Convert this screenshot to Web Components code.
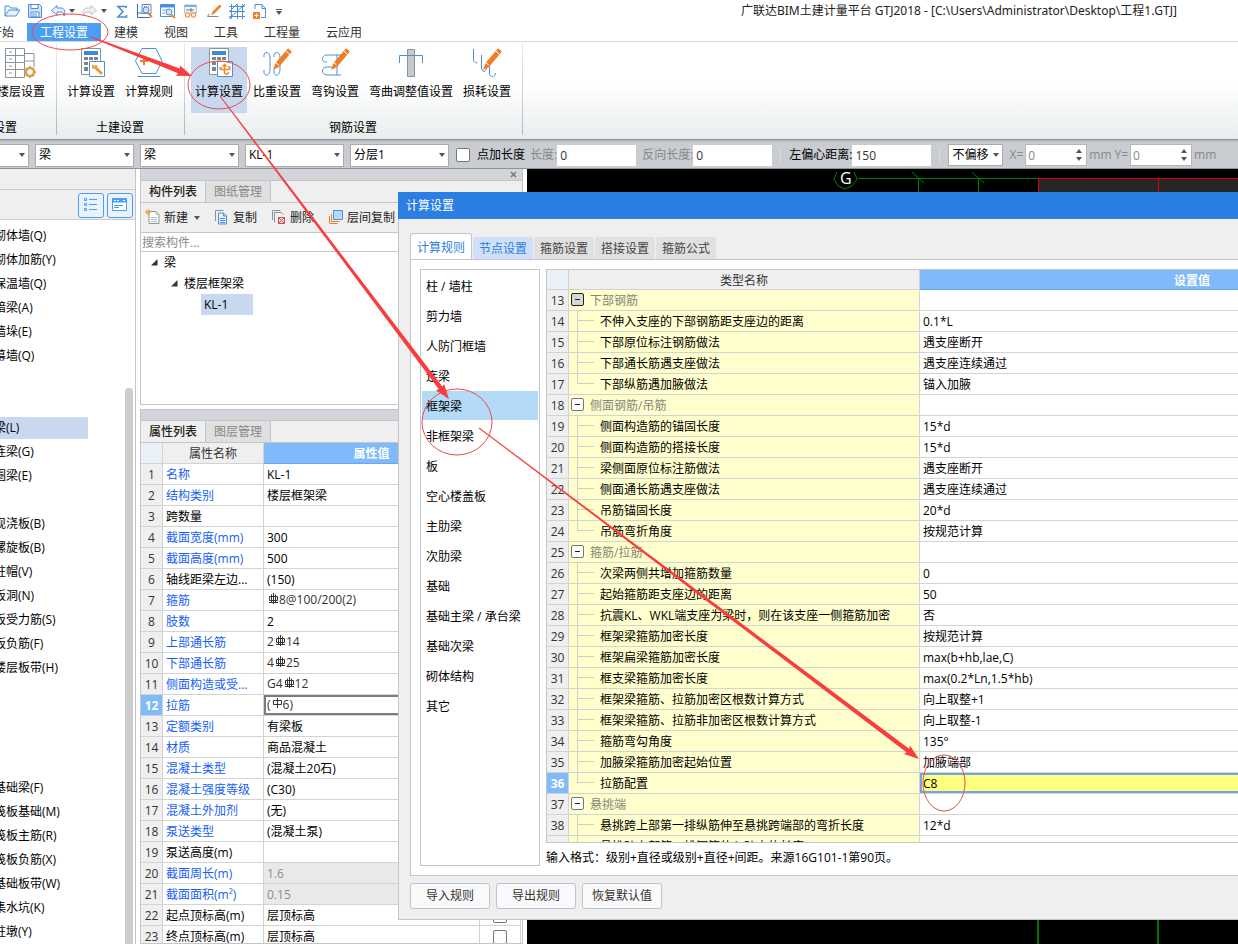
<!DOCTYPE html>
<html lang="zh-CN">
<head>
<meta charset="utf-8">
<title>广联达BIM土建计量平台 GTJ2018</title>
<style>
  html, body { margin: 0; height: 100%; overflow: hidden; }
  body { font: 12px/20px "Open Sans", "Noto Sans CJK SC", sans-serif; color: #000; background: #fff; }
</style>
</head>
<body>
<gtj-app></gtj-app>
<script>
const RESET = `<style>
  *, *::before, *::after { box-sizing: border-box; }
  :host { display: block; }
  button, input, select { font: inherit; color: inherit; margin: 0; padding: 0; border: 0; background: none; border-radius: 0; outline: 0; }
  ul { list-style: none; margin: 0; padding: 0; }
  svg { display: block; flex: none; }
  table { border-collapse: separate; border-spacing: 0; table-layout: fixed; }
</style>`;

function define(name, render, after) {
  customElements.define(name, class extends HTMLElement {
    constructor() { super(); this.attachShadow({ mode: 'open' }); }
    connectedCallback() {
      if (this.shadowRoot.firstChild) return;
      this.shadowRoot.innerHTML = RESET + render(this);
      if (after) after(this);
    }
  });
}

const B = '#4a90d9', O = '#f07d28', G = '#8a9399';
const CARET = '<svg width="6" height="4" viewBox="0 0 6 4"><path d="M0 0h6L3 4z" fill="#555"/></svg>';

const SMALL = {
  open: `<path d="M1 14V4h4l2 2h6v3M1 14L5 8h11l-4 6z" fill="#eaf3fd" stroke="${B}"/>`,
  save: `<path d="M1.500 2.500h11l2 2v11h-13z" fill="#cfe3f9" stroke="${B}"/><path d="M4 2.500h7v4H4zM4 10h8v5H4z" fill="#fff" stroke="${B}"/><path d="M5 12h5M5 14h5" stroke="${B}"/>`,
  undo: `<path d="M7 3.500L1.500 8.500 7 13v-3h4c2 0 3 1 3 4 2-5 0-8-3-8H7z" fill="#eaf3fd" stroke="${B}"/>`,
  redo: `<path d="M9 3.500l5.500 5L9 13v-3H5c-2 0-3 1-3 4-2-5 0-8 3-8h4z" fill="#f4f4f4" stroke="#c3c3c3"/>`,
  sum: `<path d="M12 6V4.500H4L9 9.500 4 15h8.500v-2" fill="none" stroke="${B}" stroke-width="1.600"/>`,
  measure: `<path d="M.5 2v13.500H13M.5 11h5V8" fill="none" stroke="#3b6ea8"/><path d="M5 2.500h9v9H5z" fill="#fff4e8" stroke="${B}"/><path d="M7 4.500h6M7 6.500h3" stroke="${O}" stroke-dasharray="1 1"/><circle cx="9" cy="8" r="3" fill="#cfe3f9" stroke="${B}"/><path d="M11 11l4 4" stroke="${O}" stroke-width="2"/>`,
  find: `<path d="M.5 2.500h14v12H.5z" fill="#fff" stroke="${B}"/><path d="M.5 2.500h14v3H.5z" fill="${B}"/><path d="M2 8h4M2 11h3" stroke="#99a"/><circle cx="9" cy="10" r="3" fill="#cfe3f9" stroke="${B}"/><path d="M11 12.500l4 3.500" stroke="#e89a20" stroke-width="2"/>`,
  view: `<path d="M1.500 3h12v8h-12z" fill="#f5f9fd" stroke="#9fc3ea"/><path d="M1.500 3h12v2h-12z" fill="#7ab0ea"/><path d="M3 8h3M8 6v4M6 8h5" stroke="#777"/><circle cx="4.500" cy="13" r="2.300" fill="#ffe9d8" stroke="${O}"/><circle cx="10.500" cy="13" r="2.300" fill="#ffe9d8" stroke="${O}"/>`,
  pen: `<path d="M14.500 3.500L7 11" stroke="${O}" stroke-width="2.500"/><path d="M5 13l1.500-3 1.500 2z" fill="${O}"/><path d="M3 12L1.500 14.500h11" fill="none" stroke="#888"/>`,
  grid: `<path d="M0 4.500h16M0 9.500h16M0 14.500h16M2.500 2v15M8.500 2v15M13.500 2v15M0 17L16 2M0 10l8-8" fill="none" stroke="${B}"/>`,
  add: `<path d="M3 7V2.500h7l3.500 4v9H9M10 2.500v4h3.500" fill="#fff" stroke="${B}"/><path d="M1 10h7v7H1z" fill="${O}"/><path d="M4.500 11.500v4M2.500 13.500h4" stroke="#fff"/>`,
  newdoc: `<path d="M4 2.500h7l3 3v9H4z" fill="#fff" stroke="${G}"/><path d="M11 2.500v3h3M6 8.500h6M6 10.500h6M6 12.500h6" fill="none" stroke="#b3bbc0"/><path d="M3 0v6M0 3h6M1 1l4 4M5 1L1 5" stroke="#f5a031"/>`,
  copy: `<path d="M1.500 12V1.500h8" fill="none" stroke="${G}"/><path d="M4.500 4h5l3 3v8h-8z" fill="#e3f0fd" stroke="${B}"/><path d="M9.500 4v3h3M6 9.500h5M6 11.500h5M6 13.500h5" fill="none" stroke="${B}"/>`,
  del: `<path d="M1.500 11V1.500h8M3.500 13V3.500h7l2 2" fill="none" stroke="${G}"/><path d="M7.500 8.500h6v6h-6z" fill="#fbe3e3" stroke="#c94a4a"/><path d="M8 9l5 5M13 9l-5 5" stroke="#c94a4a"/>`,
  floor: `<path d="M5.500 1.500h9v9h-9z" fill="#b9d9fa" stroke="${B}"/><path d="M3.500 5v7.500h8M1.500 7v7.500h8" fill="none" stroke="${O}"/>`
};
define('gtj-icon', el => `<style>:host{display:block}</style>
  <svg width="16" height="18" viewBox="0 0 16 18" aria-hidden="true">${SMALL[el.getAttribute('name')]}</svg>`);

const CALC = `<path d="M6.500 1.500h19v26h-19z" fill="#fff" stroke="${G}"/><path d="M9 4h14v4H9z" fill="#3d87dd"/><path d="M9 10h4v3H9zM14 10h4v3h-4zM19 10h4v3h-4zM9 15h4v3H9zM14 15h4v3h-4zM9 20h4v4H9z" fill="#7d868c"/><path d="M14.500 14.500h15v15h-15z" fill="#fff" stroke="${B}"/>`;
const PENCIL = `<path d="M29 3L17 17" stroke="${O}" stroke-width="5"/><path d="M25 4l4 4" stroke="#fff"/><path d="M12 23l2.500-7 4.500 3.500z" fill="${O}"/>`;
const LARGE = {
  floors: `<path d="M.5 1.500h19v29H.5zM.5 8.500h19M.5 15.500h19M.5 22.500h19M10.500 1v29" fill="#fff" stroke="${G}"/><path d="M4 5h3M4 12h3M4 19h3M4 26h3M20 6.500h9V20M20 14h9" fill="none" stroke="${G}"/><circle cx="25" cy="25" r="4" fill="#fff" stroke="#e09a4c" stroke-width="2.500"/><path d="M25 19v2M25 29v2M19 25h2M29 25h2M21 21l1 1M28 28l1 1M29 21l-1 1M22 28l-1 1" stroke="#e09a4c" stroke-width="2"/>`,
  wrench: CALC + `<path d="M20 20l7 7" stroke="#ee9b3a" stroke-width="3"/><path d="M18 18v2.500h3V18" fill="none" stroke="#ee9b3a" stroke-width="2"/>`,
  rules: `<path d="M9 1.500h14l6 12.500-6 12.500H9L2.500 14z" fill="#fff" stroke="${B}"/><path d="M4.500 29.500h23" stroke="${B}"/><path d="M11 10v8M7 14h8" stroke="${O}" stroke-width="2"/><path d="M18 14h6" stroke="${O}"/>`,
  bars: CALC + `<path d="M17 22.500h10M21.500 18v7c0 3 4 3 4 0M20 19.500l1.500-2 2 2M17 22.500c0-2 0-2 2-2M27 22.500c0-2-1-3-2-3" fill="none" stroke="#f08a28" stroke-width="1.500"/>`,
  weight: `<path d="M3 10c-1-6 6-6 6 0v12c0 8-7 8-6 1M13 10c-1-6 6-6 6 0v12c0 8-7 8-6 1" fill="none" stroke="${B}"/>` + PENCIL,
  hook: `<path d="M8 15c-6 1-6-7 0-7h14M18 8v20M22 28H8c-6 0-6-8 0-8h8" fill="none" stroke="${B}"/>` + PENCIL,
  bend: `<path d="M12.500 2.500h7v27h-7z" fill="#c5cacf" stroke="${G}"/><path d="M4.500 16V8.500h23V16" fill="none" stroke="${B}"/>`,
  loss: `<path d="M2.500 2v10c0 4 4 4 4 4M10.500 8v12c0 6 5 6 5 0M18.500 14v12c0 5 6 5 6 0" fill="none" stroke="${B}"/>` + PENCIL
};
define('ribbon-button', el => `<style>
  button { display: flex; flex-direction: column; align-items: center; height: 66px; padding: 0 4px; white-space: nowrap; }
  :host([active]) button { background: #c8d9ef; }
  span { margin-top: 1px; }
  </style><button><svg width="32" height="34" viewBox="0 0 32 34" aria-hidden="true">${LARGE[el.getAttribute('icon')]}</svg><span><slot></slot></span></button>`);

define('ribbon-group', el => `<style>
  :host { display: flex; flex-direction: column; height: 92px; padding: 4px 7px 0 6px; border-right: 1px solid; border-image: linear-gradient(#eee,#b4b8bb) 1; flex: none; }
  :host([start]) footer { text-align: left; }
  div { display: flex; gap: 2px; }
  footer { margin-top: 5px; text-align: center; }
  </style><div><slot></slot></div><footer>${el.getAttribute('label')}</footer>`);

define('quick-bar', () => {
  const b = (n, t) => `<button title="${t}"><gtj-icon name="${n}"></gtj-icon></button>`;
  const s = (n, t) => `<span>${b(n, t)}<button title="${t}列表">${CARET}</button></span>`;
  return `<style>
  :host { display: flex; align-items: center; height: 22px; padding: 0 61px 0 4px; gap: 7px; }
  span { display: flex; align-items: center; gap: 3px; }
  button { display: block; flex: none; }
  .more { margin-left: 1px; padding-top: 2px; }
  h1 { margin: 0 0 0 auto; font: 12px/20px "Noto Sans", "Noto Sans CJK SC", sans-serif; color: #222; white-space: pre; }
  </style>${b('open', '打开')}${b('save', '保存')}${s('undo', '撤销')}${s('redo', '恢复')}${b('sum', '汇总计算')}${b('measure', '查看工程量')}${b('find', '查找')}${b('view', '查看')}${b('pen', '标注')}${b('grid', '轴网')}${b('add', '添加')}
  <button class="more" title="更多"><svg width="6" height="6" viewBox="0 0 6 6"><path d="M0 .5h6" stroke="#555"/><path d="M0 2h6L3 6z" fill="#555"/></svg></button>
  <h1>广联达BIM土建计量平台 GTJ2018 - [C:\\Users\\Administrator\\Desktop\\工程1.GTJ]</h1>`;
});

define('menu-tabs', () => `<style>
  :host { display: flex; height: 20px; margin-left: -23px; padding-top: 1px; border-bottom: 1px solid #d5d5d5; }
  a { padding: 0 13px; line-height: 20px; height: 18px; color: #333; text-decoration: none; white-space: nowrap; }
  a[aria-current] { background: #4c9ef3; color: #fff; }
  </style><a href="#">开始</a><a href="#" aria-current="page">工程设置</a><a href="#">建模</a><a href="#">视图</a><a href="#">工具</a><a href="#">工程量</a><a href="#">云应用</a>`);

define('ribbon-bar', () => `<style>
  :host { display: flex; height: 98px; padding-top: 1px; overflow: hidden; border-bottom: 1px solid #8c9094; background: linear-gradient(#fff 45%, #e8edee); }
  .first { margin-left: -13px; }
  </style>
  <ribbon-group class="first" start label="设置"><ribbon-button icon="floors">楼层设置</ribbon-button></ribbon-group>
  <ribbon-group label="土建设置"><ribbon-button icon="wrench">计算设置</ribbon-button><ribbon-button icon="rules">计算规则</ribbon-button></ribbon-group>
  <ribbon-group label="钢筋设置"><ribbon-button icon="bars" active>计算设置</ribbon-button><ribbon-button icon="weight">比重设置</ribbon-button><ribbon-button icon="hook">弯钩设置</ribbon-button><ribbon-button icon="bend">弯曲调整值设置</ribbon-button><ribbon-button icon="loss">损耗设置</ribbon-button></ribbon-group>`);

define('combo-box', el => `<style>
  :host { position: relative; flex: none; width: 99px; height: 23px; }
  :host([compact]) { width: 55px; height: 22px; }
  select { appearance: none; width: 100%; height: 100%; background: #fff; border: 1px solid #a9abae; padding: 0 3px; line-height: 20px; }
  svg { position: absolute; right: 4px; top: 50%; margin-top: -2px; pointer-events: none; }
  </style><select aria-label="${el.getAttribute('label')}"><option>${el.getAttribute('value')}</option></select>${CARET}`);

define('text-field', el => `<style>
  :host { display: flex; align-items: center; flex: none; white-space: nowrap; }
  :host([muted]) label { color: #888; }
  input { width: 79px; height: 21px; background: #fff; padding: 0 3px; color: #333; }
  </style><label for="i">${el.getAttribute('label')}</label><input id="i" value="${el.getAttribute('value')}">`);

define('spin-field', el => `<style>
  :host { display: flex; align-items: center; flex: none; color: #888; position: relative; white-space: nowrap; }
  input { width: 62px; height: 22px; background: #fff; border: 1px solid #b4b6b9; padding: 0 2px; margin: 0 1px 0 2px; }
  i { display: flex; flex-direction: column; gap: 4px; width: 12px; margin-left: -12px; margin-right: 1px; }
  </style><label for="i">${el.getAttribute('label')}</label><input id="i" value="0"><i><svg width="6" height="4"><path d="M0 4h6L3 0z" fill="#555"/></svg><svg width="6" height="4"><path d="M0 0h6L3 4z" fill="#555"/></svg></i><span>mm</span>`);

define('option-bar', () => `<style>
  :host { display: flex; align-items: center; height: 29px; overflow: hidden; background: #c9ccd1; border-top: 2px solid #b9bcc1; border-bottom: 1px solid #8e9297; white-space: nowrap; }
  .first { margin-left: -70px; }
  combo-box { margin-right: 6px; }
  input { appearance: none; width: 14px; height: 14px; background: #fff; border: 1px solid #777; border-radius: 2px; margin: 0 7px 0 1px; flex: none; }
  .check { margin-right: 5px; display: flex; align-items: center; }
  .gap { margin-right: 6px; }
  .near { margin-right: 3px; }
  hr { width: 1px; height: 16px; margin: 0 8px; border: 0; background: #d7d9dc; flex: none; }
  </style>
  <combo-box class="first" label="楼层" value=" "></combo-box><combo-box label="构件大类" value="梁"></combo-box><combo-box label="构件类型" value="梁"></combo-box><combo-box label="构件" value="KL-1"></combo-box><combo-box label="分层" value="分层1"></combo-box>
  <label class="check"><input type="checkbox">点加长度</label>
  <text-field class="gap" muted label="长度:" value="0"></text-field>
  <text-field muted label="反向长度:" value="0"></text-field><hr>
  <text-field label="左偏心距离:" value="150"></text-field><hr>
  <combo-box compact label="偏移方式" value="不偏移"></combo-box>
  <spin-field class="near" label="X="></spin-field>
  <spin-field label="Y="></spin-field>`);

define('module-panel', () => {
  const sections = [
    ['g48', ['砌体墙(Q)', '砌体加筋(Y)', '保温墙(Q)', '暗梁(A)', '墙垛(E)', '幕墙(Q)']],
    ['g24', ['梁(L)*', '连梁(G)', '圈梁(E)']],
    ['g96', ['现浇板(B)', '螺旋板(B)', '柱帽(V)', '板洞(N)', '板受力筋(S)', '板负筋(F)', '楼层板带(H)']],
    ['', ['基础梁(F)', '筏板基础(M)', '筏板主筋(R)', '筏板负筋(X)', '基础板带(W)', '集水坑(K)', '柱墩(Y)']]
  ];
  return `<style>
  :host { display: flex; flex-direction: column; width: 136px; flex: none; border-right: 1px solid #c3c5cb; overflow: hidden; background: #fff; }
  header { height: 21px; background: #efefef; border-bottom: 1px solid #c9cbd0; flex: none; }
  .tools { display: flex; justify-content: flex-end; align-items: center; gap: 3px; height: 30px; padding: 1px 2px 0 0; background: #efefef; border-bottom: 1px solid #c9cbd0; flex: none; }
  .tools button { width: 26px; height: 25px; border: 1px solid #4c9ef3; border-radius: 3px; background: #eaf3fd; display: grid; place-items: center; }
  .body { display: flex; flex: 1; min-height: 0; }
  nav { flex: 1; margin-left: -6px; padding-top: 4px; }
  li { height: 24px; line-height: 22px; border: solid transparent; border-width: 1px 0; background-clip: padding-box; white-space: nowrap; }
  li.on { background-color: #c8d9ef; width: 94px; }
  .g48 { margin-bottom: 48px; } .g24 { margin-bottom: 24px; } .g96 { margin-bottom: 96px; }
  .bar { width: 8px; margin: 168px 2px 0 0; background: #cdcdcd; border-radius: 4px 4px 0 0; }
  </style><header></header>
  <div class="tools"><button title="列表"><svg width="14" height="14" viewBox="0 0 14 14" fill="none" stroke="#4c9ef3"><path d="M.5.500h2v2h-2zM.5 5.500h2v2h-2zM.5 10.500h2v2h-2zM5 1.500h8M5 6.500h8M5 11.500h8"/></svg></button>
  <button title="面板"><svg width="16" height="14" viewBox="0 0 16 14"><path d="M.5.500h14v12H.5z" fill="#fff" stroke="#4c9ef3"/><path d="M.5.500h14v4H.5z" fill="#4c9ef3"/><path d="M2 2.500h6M11 2.500h2" stroke="#fff" stroke-dasharray="2 1"/><path d="M2 7.500h9M2 9.500h5" stroke="#4c9ef3"/></svg></button></div>
  <div class="body"><nav>${sections.map(([c, items]) => `<ul class="${c}">${items.map(t => t.endsWith('*') ? `<li class="on">${t.slice(0, -1)}</li>` : `<li>${t}</li>`).join('')}</ul>`).join('')}</nav><div class="bar"></div></div>`;
});

define('dock-panel', el => {
  const [a, b] = el.getAttribute('tabs').split(',');
  return `<style>
  :host { display: flex; flex-direction: column; border: 1px solid #c3c5cb; border-top: 0; background: #fff; min-height: 0; overflow: hidden; }
  header { height: 12px; flex: none; background: #d4d5da; border-bottom: 1px solid #c3c5cb; display: flex; justify-content: flex-end; align-items: center; padding-right: 5px; }
  :host([second]) header { border-top: 1px solid #c3c5cb; }
  .tabs { display: flex; height: 22px; flex: none; background: #efefef; border-bottom: 1px solid #c3c5cb; }
  .tabs button { width: 65px; border-right: 1px solid #c3c5cb; background: #e0e0e0; color: #888; }
  .tabs button:first-child { background: #efefef; color: #222; font-weight: 500; }
  </style><header>${el.hasAttribute('second') ? '' : '<button title="关闭"><svg width="7" height="7" viewBox="0 0 7 7"><path d="M1 1l5 5M6 1L1 6" stroke="#777" stroke-width="1.500"/></svg></button>'}</header>
  <div class="tabs"><button>${a}</button><button>${b}</button></div><slot></slot>`;
});

define('component-tree', () => {
  const tri = '<svg width="7" height="7"><path d="M6.500 0v6.500H0z" fill="#333"/></svg>';
  return `<style>
  :host { display: flex; flex-direction: column; flex: 1; }
  .tools { display: flex; align-items: center; gap: 14px; height: 30px; padding-left: 4px; background: #efefef; border-bottom: 1px solid #c3c5cb; white-space: nowrap; }
  button { display: flex; align-items: center; gap: 3px; color: #222; }
  button svg { margin-left: 3px; }
  input { height: 19px; padding: 1px 1px 0; border-bottom: 1px solid #c3c5cb; width: 100%; }
  input::placeholder { color: #8a8a8a; opacity: 1; }
  li { display: flex; align-items: center; gap: 6px; height: 21px; }
  .l1 { padding-left: 10px; } .l2 { padding-left: 30px; } .l3 { padding-left: 60px; }
  .l3 span { background: #c8d9ef; width: 52px; padding-left: 3px; line-height: 21px; }
  </style>
  <div class="tools"><button><gtj-icon name="newdoc"></gtj-icon>新建 ${CARET}</button><button><gtj-icon name="copy"></gtj-icon>复制</button><button><gtj-icon name="del"></gtj-icon>删除</button><button><gtj-icon name="floor"></gtj-icon>层间复制</button></div>
  <input aria-label="搜索构件" placeholder="搜索构件...">
  <ul><li class="l1">${tri}梁</li><li class="l2">${tri}楼层框架梁</li><li class="l3"><span>KL-1</span></li></ul>`;
});

const BAR3 = '<svg width="11" height="11" viewBox="0 0 11 11" fill="none" stroke="#333"><path d="M1.500 3.500h8v4h-8zM3.500 1.500v8M5.500 0v11M7.500 1.500v8M1 9.500h9"/></svg>';
const BAR1 = '<svg width="11" height="11" viewBox="0 0 11 11" fill="none" stroke="#333"><path d="M1.500 2.500h8v4h-8zM5.500 0v10"/></svg>';
define('property-table', () => {
  const rows = [['名称', 'KL-1', 1], ['结构类别', '楼层框架梁', 1], ['跨数量', '', 0], ['截面宽度(mm)', '300', 1], ['截面高度(mm)', '500', 1], ['轴线距梁左边...', '(150)', 0], ['箍筋', '^8@100/200(2)', 1], ['肢数', '2', 1], ['上部通长筋', '2^14', 1], ['下部通长筋', '4^25', 1], ['侧面构造或受...', 'G4^12', 1], ['拉筋', '(~6)', 1], ['定额类别', '有梁板', 1], ['材质', '商品混凝土', 1], ['混凝土类型', '(混凝土20石)', 1], ['混凝土强度等级', '(C30)', 1], ['混凝土外加剂', '(无)', 1], ['泵送类型', '(混凝土泵)', 1], ['泵送高度(m)', '', 0], ['截面周长(m)', '1.6', 1], ['截面面积(m²)', '0.15', 1], ['起点顶标高(m)', '层顶标高', 0], ['终点顶标高(m)', '层顶标高', 0]];
  return `<style>
  :host { margin-right: 1px; }
  table { width: 100%; }
  td, th { height: 21px; padding: 2px 3px 0; border: solid #d3d3d3; border-width: 0 1px 1px 0; font-weight: 400; white-space: nowrap; overflow: hidden; line-height: 18px; text-align: left; }
  thead th { background: #efefef; text-align: center; color: #333; }
  thead th:first-child { background: #eaf0f7; }
  thead th.v { background: #80bafa; color: #fff; font-weight: 700; border-color: #69a9ea; }
  tbody th { background: #efefef; text-align: center; padding: 2px 0 0; color: #333; }
  .key { color: #1560f5; }
  td.bar { color: #333; padding-top: 0; }
  .bar div { display: flex; align-items: center; height: 20px; }
  .bar svg { margin: 0 0 4px 1px; }
  .ro { background: #e9e9e9; color: #8c8c8c; }
  .sel th { background: #80bafa; color: #fff; font-weight: 700; }
  .sel .bar { box-shadow: inset 0 0 0 2px #7c7c7c; }
  input { appearance: none; display: block; width: 14px; height: 14px; margin: 0 auto; border: 1px solid #777; border-radius: 2px; }
  </style><table><colgroup><col style="width:22px"><col style="width:101px"><col><col style="width:41px"></colgroup>
  <thead><tr><th></th><th>属性名称</th><th class="v">属性值</th><th>附加</th></tr></thead><tbody>${rows.map(([k, v, key], i) => {
    const bar = /[\^~]/.test(v);
    const cls = bar ? 'bar' : (i === 19 || i === 20) ? 'ro' : '';
    const val = bar ? `<div>${v.replace('^', BAR3).replace('~', BAR1)}</div>` : v;
    return `<tr${i === 11 ? ' class="sel"' : ''}><th>${i + 1}</th><td${key ? ' class="key"' : ''}>${k}</td><td class="${cls}">${val}</td><td><input type="checkbox" aria-label="${k}附加"></td></tr>`;
  }).join('')}</tbody></table>`;
});

define('model-canvas', () => `<style>
  :host { flex: 1; min-width: 0; background: #000; overflow: hidden; display: flex; flex-direction: column; justify-content: space-between; }
  text { font: 16px "Open Sans", sans-serif; }
  </style>
  <svg width="1200" height="30" viewBox="527 169 1200 30" fill="none" stroke="#008000"><path d="M1038 178h700v30h-700z" fill="#262626" stroke="none"/><path d="M837 172l-3 7 4 7 7 3 7-3 5-7-3-7M858 178.500h180M918.500 178v22M978.500 178v22M912 172l12 11M972 172l12 11"/><path d="M1038.500 200v-21.500H1760M1158.500 178v22" stroke="#e00000"/><text x="840" y="184" fill="#fff" stroke="none">G</text></svg>
  <svg width="1200" height="30" viewBox="527 914 1200 30" stroke="#007000" stroke-width="2"><path d="M1038 910v40M1158 910v40"/></svg>`);

define('rule-table', () => {
  const data = [['下部钢筋', null], ['不伸入支座的下部钢筋距支座边的距离', '0.1*L'], ['下部原位标注钢筋做法', '遇支座断开'], ['下部通长筋遇支座做法', '遇支座连续通过'], ['下部纵筋遇加腋做法', '锚入加腋'], ['侧面钢筋/吊筋', null], ['侧面构造筋的锚固长度', '15*d'], ['侧面构造筋的搭接长度', '15*d'], ['梁侧面原位标注筋做法', '遇支座断开'], ['侧面通长筋遇支座做法', '遇支座连续通过'], ['吊筋锚固长度', '20*d'], ['吊筋弯折角度', '按规范计算'], ['箍筋/拉筋', null], ['次梁两侧共增加箍筋数量', '0'], ['起始箍筋距支座边的距离', '50'], ['抗震KL、WKL端支座为梁时，则在该支座一侧箍筋加密', '否'], ['框架梁箍筋加密长度', '按规范计算'], ['框架扁梁箍筋加密长度', 'max(b+hb,lae,C)'], ['框支梁箍筋加密长度', 'max(0.2*Ln,1.5*hb)'], ['框架梁箍筋、拉筋加密区根数计算方式', '向上取整+1'], ['框架梁箍筋、拉筋非加密区根数计算方式', '向上取整-1'], ['箍筋弯勾角度', '135°'], ['加腋梁箍筋加密起始位置', '加腋端部'], ['拉筋配置', 'C8'], ['悬挑端', null], ['悬挑跨上部第一排纵筋伸至悬挑跨端部的弯折长度', '12*d'], ['悬挑跨上部第二排钢筋伸入跨内的长度', '']];
  return `<style>
  :host { border: 1px solid #c3c5cb; overflow: hidden; flex: 1; min-height: 0; }
  table { width: 100%; }
  td, th { height: 21px; padding: 2px 3px 0; border: solid #d3d3d3; border-width: 0 1px 1px 0; font-weight: 400; text-align: left; line-height: 18px; white-space: nowrap; overflow: hidden; }
  thead th { height: 20px; line-height: 17px; background: #efefef; text-align: center; color: #333; }
  thead th:first-child { background: #eaf0f7; }
  thead th.v { background: #80bafa; color: #fff; font-weight: 700; border-color: #69a9ea; }
  tbody th { background: #efefef; color: #333; padding: 2px 0 0; text-align: center; }
  .name { background-color: #ffffcd; padding-left: 31px; background-repeat: no-repeat; }
  .kid { background-image: linear-gradient(#cfcfc4,#cfcfc4), linear-gradient(#cfcfc4,#cfcfc4); background-size: 1px 100%, 16px 1px; background-position: 8px 0, 9px 9px; }
  .last { background-size: 1px 10px, 16px 1px; }
  .group { padding-left: 2px; color: #85857a; }
  .group div { display: flex; align-items: center; gap: 6px; height: 18px; }
  .group button { width: 13px; height: 13px; border: 1px solid #777; border-radius: 2px; background: #fff; display: grid; place-items: center; flex: none; margin-bottom: 3px; }
  tr:first-child .group button { background: #d8d8d8; border-color: #222; }
  .sel th { background: #80bafa; color: #fff; font-weight: 700; }
  .sel .val { background: #ffff80; box-shadow: inset 0 0 0 2px #6aa8ea; }
  </style><table><colgroup><col style="width:22px"><col style="width:351px"><col></colgroup>
  <thead><tr><th></th><th>类型名称</th><th class="v">设置值</th></tr></thead><tbody>${data.map(([k, v], i) => {
    if (v === null) return `<tr><th>${i + 13}</th><td class="name group"><div><button title="折叠"><svg width="5" height="1"><path d="M0 .5h5" stroke="#222"/></svg></button>${k}</div></td><td></td></tr>`;
    const last = data[i + 1] && data[i + 1][1] === null;
    return `<tr${i === 23 ? ' class="sel"' : ''}><th>${i === 26 ? '' : i + 13}</th><td class="name kid${last ? ' last' : ''}">${k}</td><td class="val">${v}</td></tr>`;
  }).join('')}</tbody></table>`;
});

define('settings-dialog', () => {
  const cats = ['柱 / 墙柱', '剪力墙', '人防门框墙', '连梁', '框架梁', '非框架梁', '板', '空心楼盖板', '主肋梁', '次肋梁', '基础', '基础主梁 / 承台梁', '基础次梁', '砌体结构', '其它'];
  return `<style>
  :host { display: flex; flex-direction: column; background: #efefef; border: 1px solid #c3c5cb; border-top: 0; }
  h2 { margin: 0 0 0 -1px; height: 27px; padding-left: 8px; background: #2b7fe3; color: #fff; font: inherit; line-height: 27px; flex: none; }
  .tabs { display: flex; gap: 1px; margin: 14px 0 -1px 11px; align-items: flex-end; flex: none; }
  .tabs button { width: 60px; height: 23px; padding-top: 1px; background: #e0e0e0; color: #444; border-radius: 3px 3px 0 0; border-bottom: 1px solid #c3c5cb; white-space: nowrap; }
  .tabs button.on { width: 62px; height: 27px; background: #fff; color: #2b7fe3; border: 1px solid #c3c5cb; border-bottom: 0; }
  .tabs button.hot { background: #cfe0f8; color: #2b7fe3; }
  .page { flex: 1; min-height: 0; margin: 0 11px; padding: 9px; background: #fff; border: 1px solid #c3c5cb; display: flex; gap: 6px; }
  ul { width: 120px; flex: none; border: 1px solid #c3c5cb; padding: 1px; }
  li { height: 30px; line-height: 29px; padding: 1px 0 0 4px; border-bottom: 1px solid #fff; }
  li.on { background: #b3daf7; }
  .main { flex: 1; display: flex; flex-direction: column; min-width: 0; }
  p { margin: 0; height: 23px; line-height: 30px; flex: none; }
  footer { display: flex; gap: 6px; padding: 7px 11px 10px; flex: none; }
  footer button { width: 80px; height: 26px; border: 1px solid #b9c3d6; border-radius: 3px; background: #fafafa; color: #333; }
  </style><h2>计算设置</h2>
  <div class="tabs"><button class="on">计算规则</button><button class="hot">节点设置</button><button>箍筋设置</button><button>搭接设置</button><button>箍筋公式</button></div>
  <div class="page"><ul>${cats.map((c, i) => `<li${i === 4 ? ' class="on"' : ''}>${c}</li>`).join('')}</ul>
  <div class="main"><rule-table></rule-table><p>输入格式：级别+直径或级别+直径+间距。来源16G101-1第90页。</p></div></div>
  <footer><button>导入规则</button><button>导出规则</button><button>恢复默认值</button></footer>`;
});

define('red-marks', () => {
  const arrow = (x1, y1, x2, y2, w) => {
    const L = Math.hypot(x2 - x1, y2 - y1), ux = (x2 - x1) / L, uy = (y2 - y1) / L;
    const p = (d, o) => `${(x1 + ux * d - uy * o).toFixed(1)},${(y1 + uy * d + ux * o).toFixed(1)}`;
    return `<polygon points="${p(0, -.5)} ${p(L - 14, -w)} ${p(L - 15, -w - 3)} ${p(L, 0)} ${p(L - 15, w + 3)} ${p(L - 14, w)} ${p(0, .5)}"/>`;
  };
  return `<style>:host{pointer-events:none}</style><svg width="1238" height="944" viewBox="0 0 1238 944" fill="#f93c3c">
  <g fill="none" stroke="#ec4a4a"><ellipse cx="70" cy="32" rx="38" ry="18"/><ellipse cx="219" cy="85" rx="31" ry="24"/><ellipse cx="457" cy="422" rx="35" ry="33"/><ellipse cx="944" cy="783" rx="21" ry="28"/></g>
  ${arrow(91, 37, 192, 76, 2.5)}${arrow(220, 96, 449, 399, 2.2)}${arrow(479, 428, 919, 759, 2.2)}</svg>`;
});

define('gtj-app', () => `<style>
  :host { position: relative; display: flex; flex-direction: column; height: 100vh; overflow: hidden; }
  quick-bar, menu-tabs, ribbon-bar, option-bar { flex: none; }
  main { flex: 1; display: flex; min-height: 0; gap: 4px; }
  .docks { width: 383px; flex: none; display: flex; flex-direction: column; gap: 4px; min-height: 0; }
  .docks .top { height: 236px; flex: none; }
  .docks .bottom { flex: 1; }
  settings-dialog { position: absolute; left: 398px; right: -250px; top: 192px; bottom: 24px; }
  red-marks { position: absolute; left: 0; top: 0; }
  </style>
  <quick-bar></quick-bar><menu-tabs></menu-tabs><ribbon-bar></ribbon-bar><option-bar></option-bar>
  <main><module-panel></module-panel>
    <div class="docks"><dock-panel class="top" tabs="构件列表,图纸管理"><component-tree></component-tree></dock-panel>
    <dock-panel class="bottom" second tabs="属性列表,图层管理"><property-table></property-table></dock-panel></div>
    <model-canvas></model-canvas></main>
  <settings-dialog></settings-dialog><red-marks></red-marks>`);
</script>
</body>
</html>
